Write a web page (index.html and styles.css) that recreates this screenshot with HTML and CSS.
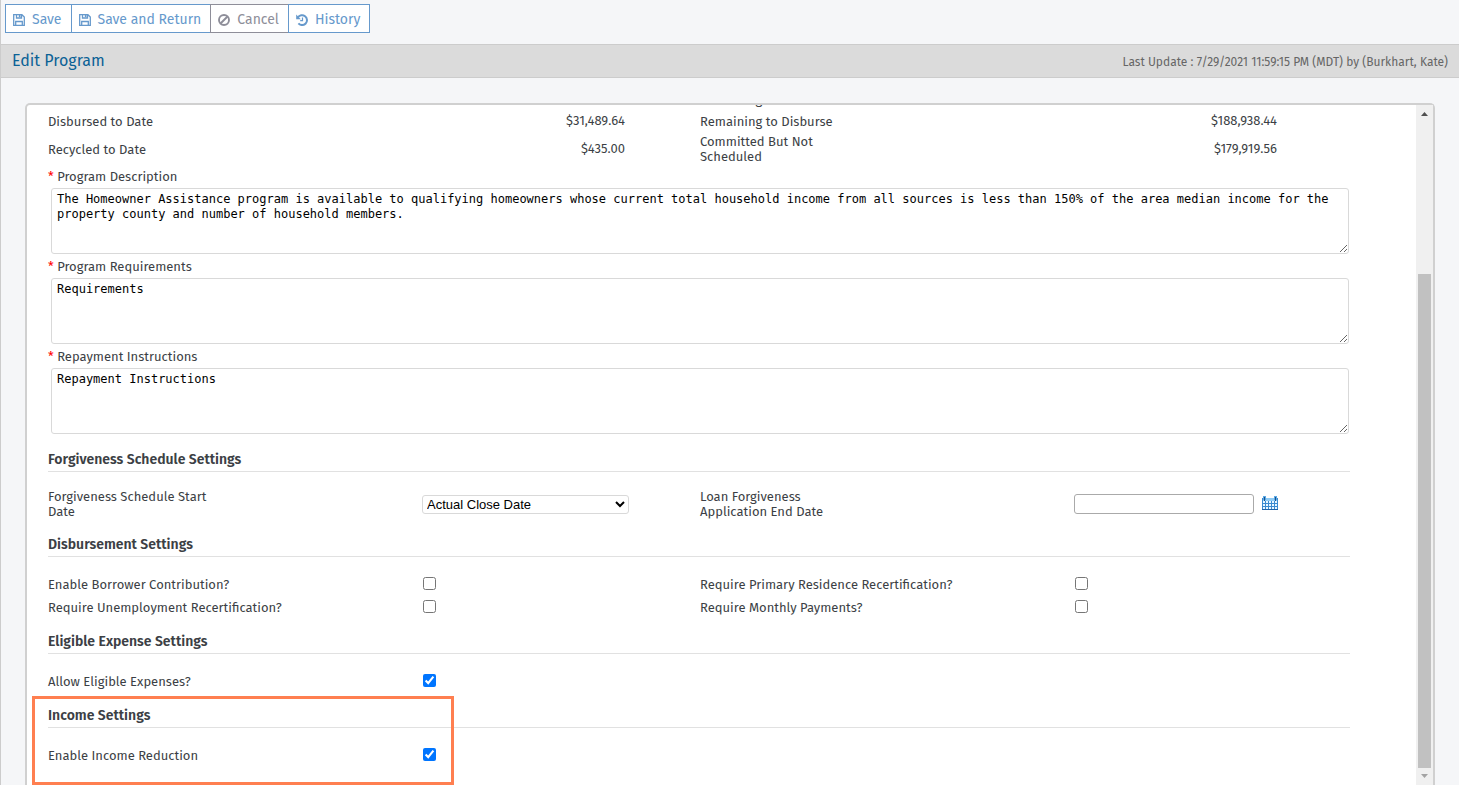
FILE: index.html
```html
<!DOCTYPE html>
<html lang="en">
<head>
<meta charset="utf-8">
<title>Edit Program</title>
<link rel="stylesheet" href="styles.css">
</head>
<body>
<div class="toolbar">
  <button type="button" class="btn">
    <svg class="icon" viewBox="0 0 12 12"><path d="M.7.7h8.200l2.400 2.400v8.200H.7zM3.500.7v3.300h5V.7M2.700 11.300V7.500h6.600v3.800" fill="none" stroke="currentColor" stroke-width="1.300"/><path d="M5.800 1h1.700v2.200H5.800z" fill="currentColor"/></svg>
    Save</button>
  <button type="button" class="btn">
    <svg class="icon" viewBox="0 0 12 12"><path d="M.7.7h8.200l2.400 2.400v8.200H.7zM3.500.7v3.300h5V.7M2.700 11.300V7.500h6.600v3.800" fill="none" stroke="currentColor" stroke-width="1.300"/><path d="M5.800 1h1.700v2.200H5.800z" fill="currentColor"/></svg>
    Save and Return</button>
  <button type="button" class="btn btn-cancel">
    <svg class="icon" viewBox="0 0 12 12"><path d="M2.500 9.500l7-7" stroke="currentColor" stroke-width="1.900"/><circle cx="6" cy="6" r="5" fill="none" stroke="currentColor" stroke-width="1.900"/></svg>
    Cancel</button>
  <button type="button" class="btn">
    <svg class="icon" viewBox="0 0 12 12"><path d="M1.900 3.600A4.900 4.900 0 1 1 2.400 9.400" fill="none" stroke="currentColor" stroke-width="2"/><path d="M.2.6v4.600h4.600z" fill="currentColor"/><path d="M6.500 3.400v3.200H4.200" fill="none" stroke="currentColor" stroke-width="1.200"/></svg>
    History</button>
</div>

<div class="titlebar">
  <h1>Edit Program</h1>
  <span class="updated">Last Update : 7/29/2021 11:59:15 PM (MDT) by (Burkhart, Kate)</span>
</div>

<div class="panel">
  <form class="content">
    <div class="row row-cut">
      <div class="cell"></div>
      <div class="cell"><span class="lbl">Remaining</span></div>
    </div>
    <div class="row">
      <div class="cell"><span class="lbl">Disbursed to Date</span><span class="amount">$31,489.64</span></div>
      <div class="cell"><span class="lbl">Remaining to Disburse</span><span class="amount">$188,938.44</span></div>
    </div>
    <div class="row row-tall">
      <div class="cell"><span class="lbl">Recycled to Date</span><span class="amount">$435.00</span></div>
      <div class="cell"><span class="lbl"><span class="wrap">Committed But Not Scheduled</span></span><span class="amount">$179,919.56</span></div>
    </div>

    <label class="arealbl" for="description"><span class="req">*</span> Program Description</label>
    <textarea id="description">The Homeowner Assistance program is available to qualifying homeowners whose current total household income from all sources is less than 150% of the area median income for the property county and number of household members.</textarea>
    <label class="arealbl" for="requirements"><span class="req">*</span> Program Requirements</label>
    <textarea id="requirements">Requirements</textarea>
    <label class="arealbl" for="repayment"><span class="req">*</span> Repayment Instructions</label>
    <textarea id="repayment">Repayment Instructions</textarea>

    <section class="first">
      <h2>Forgiveness Schedule Settings</h2>
      <div class="row row-tall">
        <div class="cell">
          <label class="lbl" for="startdate"><span class="wrap">Forgiveness Schedule Start Date</span></label>
          <select id="startdate"><option>Actual Close Date</option></select>
        </div>
        <div class="cell">
          <label class="lbl" for="enddate"><span class="wrap">Loan Forgiveness Application End Date</span></label>
          <input type="text" id="enddate" class="date">
          <button type="button" class="calendar" aria-label="Pick a date">
            <svg viewBox="0 0 16 14"><path d="M0 2h16v12H0z" fill="#3a8ad0"/><path d="M1 2h14v3H1z" fill="#8ecbf5"/><path d="M1 5h2v2H1zM4 5h2v2H4zM7 5h2v2H7zM10 5h2v2h-2zM13 5h2v2h-2zM1 8h2v2H1zM4 8h2v2H4zM7 8h2v2H7zM10 8h2v2h-2zM13 8h2v2h-2zM1 11h2v2H1zM4 11h2v2H4zM7 11h2v2H7zM10 11h2v2h-2zM13 11h2v2h-2z" fill="#e9f6ff"/><path d="M1 0h3v4H1zM12 0h3v4h-3z" fill="#5aa9e6"/><path d="M2 1h1v4H2zM13 1h1v4h-1z" fill="#1c4f86"/><path d="M0 13h16v1H0z" fill="#1e62a8"/></svg>
          </button>
        </div>
      </div>
    </section>

    <section>
      <h2>Disbursement Settings</h2>
      <div class="row">
        <div class="cell"><label class="lbl" for="borrower">Enable Borrower Contribution?</label><input type="checkbox" id="borrower"></div>
        <div class="cell"><label class="lbl" for="residence">Require Primary Residence Recertification?</label><input type="checkbox" id="residence"></div>
      </div>
      <div class="row">
        <div class="cell"><label class="lbl" for="unemployment">Require Unemployment Recertification?</label><input type="checkbox" id="unemployment"></div>
        <div class="cell"><label class="lbl" for="monthly">Require Monthly Payments?</label><input type="checkbox" id="monthly"></div>
      </div>
    </section>

    <section>
      <h2>Eligible Expense Settings</h2>
      <div class="row">
        <div class="cell"><label class="lbl" for="expenses">Allow Eligible Expenses?</label><input type="checkbox" id="expenses" checked></div>
      </div>
    </section>

    <section>
      <h2>Income Settings</h2>
      <div class="row">
        <div class="cell"><label class="lbl" for="reduction">Enable Income Reduction</label><input type="checkbox" id="reduction" checked></div>
      </div>
      <div class="highlight"></div>
    </section>
  </form>
  <div class="scrollbar">
    <svg class="arrow" viewBox="0 0 17 17"><path d="M5 11h7L8.500 7z" fill="#505050"/></svg>
    <div class="track"><div class="thumb"></div></div>
    <svg class="arrow" viewBox="0 0 17 17"><path d="M5 6h7l-3.500 4z" fill="#a3a3a3"/></svg>
  </div>
</div>
</body>
</html>
```

FILE: styles.css
```css
* {box-sizing: border-box;}
body {
  margin: 0;
  height: 100vh;
  display: flex;
  flex-direction: column;
  overflow: hidden;
  background: #f5f6f8;
  border-left: 1px solid #ccc;
  color: #3c3f45;
  font: 13px/15px "Fira Sans","Noto Sans",sans-serif;
}

.toolbar {display: flex;padding: 4px 4px 11px;}
.btn {
  display: flex;
  align-items: center;
  gap: 7px;
  height: 29px;
  padding: 2px 9px 0 7px;
  margin-right: -1px;
  background: #fff;
  border: 1px solid #6699cc;
  color: #6699cc;
  font: 14px/20px "Fira Sans","Noto Sans",sans-serif;
}
.btn-cancel {color: #8e8e99;border-color: #8e8e99;}
.icon {width: 12px;height: 12px;}

.titlebar {
  display: flex;
  justify-content: space-between;
  align-items: center;
  height: 34px;
  padding: 0 11px;
  background: #dbdbdb;
  border-top: 1px solid #ccc;
  border-bottom: 1px solid #ccc;
}
h1 {margin: 0;font-size: 16px;line-height: 20px;font-weight: normal;color: #0b6296;}
.updated {padding-top: 2px;font-size: 12px;color: #666;}

.panel {
  display: flex;
  flex: 1;
  min-height: 0;
  margin: 25px 24px 0;
  background: #fff;
  border: 2px solid #d0d0d0;
  border-bottom: 0;
  border-radius: 5px 5px 0 0;
}
.content {flex: 1;overflow: hidden;padding: 0 66px 0 21px;}

.row {display: flex;gap: 2px;min-height: 23px;}
.row-tall {min-height: 32px;}
.row-cut {height: 4px;min-height: 0;padding-bottom: 2px;align-items: flex-end;overflow: hidden;}
.cell {display: flex;flex: 1;align-items: center;}
.lbl {flex: none;width: 374px;padding-top: 2px;}
.wrap {display: block;max-width: 170px;}
.amount {width: 203px;text-align: right;}

.arealbl {display: block;height: 24px;line-height: 26px;}
.req {color: #f00;}
textarea {
  display: block;
  width: calc(100% - 4px);
  height: 66px;
  margin-left: 3px;
  padding: 3px 5px;
  border: 1px solid #d9d9d9;
  border-radius: 3px;
  color: #000;
  font: 12px/15px Consolas,"DejaVu Sans Mono",monospace;
}

section {position: relative;padding-bottom: 10px;}
.first {margin-top: 12px;}
.first .row-tall {min-height: 34px;}
.first .lbl {padding-top: 0;}
h2 {
  margin: 0 0 15px;
  padding-top: 2px;
  font-size: 14px;
  line-height: 23px;
  font-weight: 600;
  border-bottom: 1px solid #e1e1e1;
}
select {
  width: 207px;
  height: 19px;
  background: #fff;
  border: 1px solid #d9d9d9;
  border-radius: 3px;
  color: #000;
  font: 13px Arial,"Liberation Sans",sans-serif;
}
.date {width: 180px;height: 20px;border: 1px solid #aaa;border-radius: 3px;}
.calendar {padding: 0 0 2px;margin-left: 8px;border: 0;background: none;}
.calendar svg {display: block;width: 16px;height: 14px;}
input[type=checkbox] {width: 13px;height: 13px;margin: 0 1px;}

.highlight {
  position: absolute;
  top: -6px;
  left: -16px;
  width: 422px;
  height: 89px;
  border: 3px solid #ff7f50;
}

.scrollbar {display: flex;flex-direction: column;width: 17px;background: #f0f0f0;}
.arrow {width: 17px;height: 17px;}
.track {display: flex;flex: 1;flex-direction: column;padding: 0 2px;}
.track::before {content: "";flex: 4;}
.thumb {flex: 13;background: #c1c1c1;}
```
